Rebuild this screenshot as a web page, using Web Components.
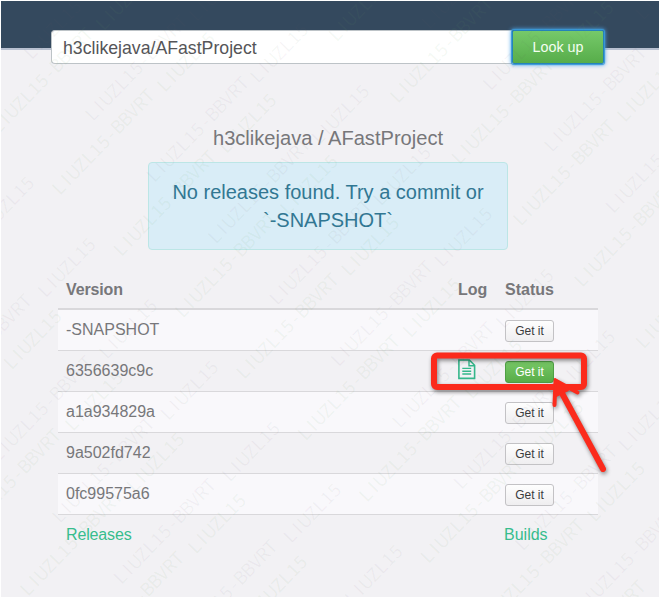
<!DOCTYPE html>
<html lang="en"><head><meta charset="utf-8"><title>AFastProject releases</title>
<style>html,body{margin:0;width:659px;height:597px;overflow:hidden}body{font-family:"Liberation Sans",Arial,sans-serif}</style></head>
<body><release-page></release-page>
<script>
const define = (name, html, setup) => customElements.define(name, class extends HTMLElement {
  constructor() {
    super();
    this.attachShadow({mode: 'open'}).innerHTML = html;
  }
  connectedCallback() { if (setup) setup(this, this.shadowRoot); }
});

define('get-button', `<style>
:host{display:block;box-sizing:border-box;width:49px;height:22px;border:1px solid #c3c2c5;border-radius:3px;background:linear-gradient(#fefefe,#efeef0);color:#3b3b3d;font-size:12px;line-height:20px;text-align:center}
:host([ready]){background:linear-gradient(#76c765,#58ad49);border-color:#4f9f44;color:#fff}
</style><slot></slot>`);

define('log-icon', `<style>:host{display:block;width:18px;height:21px}svg{display:block}</style>
<svg width="18" height="21" viewBox="0 0 18 21" fill="none" stroke="#35b78b" stroke-width="1.6"><path d="M.9 1H11.3L16.6 6.3V19.4H.9Z"/><path d="M11 1V6.7H16.6M4.3 9.4H13.2M4.3 12.2H13.2M4.3 15H13.2" stroke-width="1.4"/></svg>`);

define('version-row', `<style>
:host{display:grid;grid-template-columns:392px 47px 1fr;box-sizing:border-box;height:41px;padding-left:8px;border-bottom:1px solid #d9d8db;align-items:center;color:#77777a;font-size:16px}
:host([striped]){background:#f9f8fb}
.v{line-height:20px;padding-bottom:1px}get-button{margin-top:1px}log-icon{visibility:hidden;margin-top:-4px}
:host([ready]) log-icon{visibility:visible}
</style><span class="v"><slot></slot></span><log-icon></log-icon><get-button>Get it</get-button>`,
(host, root) => { if (host.hasAttribute('ready')) root.querySelector('get-button').setAttribute('ready', ''); });

define('lookup-bar', `<style>
:host{display:flex;width:554px;height:34px}
.field{box-sizing:border-box;width:461px;border:1px solid #bdc3c7;border-right:0;border-radius:4px 0 0 4px;background:#fff;color:#555558;font-size:17.7px;line-height:35px;padding-left:11px;white-space:nowrap}
.go{box-sizing:border-box;flex:1;border:1px solid #2583b9;border-radius:2px;background:linear-gradient(#76c96a,#57ad4a);color:#f4fff1;text-align:center;font-size:14.3px;line-height:32px;box-shadow:0 0 1px 1px #3898d8,0 0 4px 1px #52a8ec;margin-right:1px}
</style><div class="field"><slot></slot></div><div class="go">Look up</div>`);

define('release-alert', `<style>
:host{display:block;box-sizing:border-box;width:360px;height:88px;padding:15px 20px;border:1px solid #bce6e6;border-radius:4px;background:#d9edf7;color:#317793;font-size:20px;line-height:28px;text-align:center}
</style><slot></slot>`);

define('version-table', `<style>
:host{display:block;width:540px;color:#77777a;font-size:16px}
.head,.foot{display:grid;grid-template-columns:392px 47px 1fr;padding-left:8px}
.head{height:40px;box-sizing:border-box;border-bottom:2px solid #d9d8db;font-weight:bold;line-height:40px}
.head span:first-child{letter-spacing:-.15px}
.foot{line-height:40px;color:#37bd8d}.foot span:first-child{letter-spacing:-.15px}.foot span:last-child{grid-column:3;margin-left:-1px}
</style><div class="head"><span>Version</span><span>Log</span><span>Status</span></div><slot></slot><div class="foot"><span>Releases</span><span>Builds</span></div>`);

define('water-mark', `<style>:host{position:absolute;inset:-1px 0 0 -1px;pointer-events:none}svg{display:block}text{font:400 18px "Noto Sans CJK SC","Liberation Sans",sans-serif;text-anchor:middle}</style><svg width="659" height="597"></svg>`,
(host, root) => {
  // Diagonal chains: offset (x - y), one start x, long label, tint.
  const chains = [[620,638,0,0],[500,620,0,1],[397,547,1,0],[292,393,1,1],[172,253,0,0],[70,160,0,1],[-31,88,1,0],[-138,55,1,1],[-255,102,0,0],[-361,68,0,1],[-466,55,1,0],[-571,23,1,1]];
  let out = '';
  for (const [v, x0, long, green] of chains) {
    const label = long ? 'LIUZL15-BBVRT' : 'LIUZL15';
    const xs = [...label].map((_, i) => (5 + i * 10.65).toFixed(1)).join(' ');
    for (let k = -14; k < 14; k++) {
      const x = x0 + k * 61.4 + 5, y = x - v - 2;
      if (x < -90 || x > 655 || y < 4 || y > 690) continue;
      out += `<text x="${xs}" y="0" transform="translate(${x.toFixed(1)} ${y.toFixed(1)}) rotate(-46)" fill="${green ? '#65a060' : '#666066'}" fill-opacity="${green ? .075 : .06}">${label}</text>`;
    }
  }
  root.querySelector('svg').innerHTML = out;
});

define('callout-arrow', `<style>:host{position:absolute;left:418px;top:338px;pointer-events:none}svg{display:block;filter:drop-shadow(1px 2px 2px #0007)}</style>
<svg width="200" height="145" fill="none" stroke="#fb2b1c" stroke-linecap="round" stroke-linejoin="round"><rect x="15" y="16.5" width="150" height="31.5" rx="3" stroke-width="6"/><path d="M138 45L184 130" stroke-width="6"/><path d="M135.5 66L136.5 41.5L158.5 53.5" stroke-width="4"/><path d="M136 40L137 57L149 51Z" fill="#fb2b1c" stroke-width="2"/></svg>`);

define('release-page', `<style>
:host{display:block;position:relative;width:659px;height:597px;overflow:hidden;box-sizing:border-box;background:#f2f1f4;border:solid #fff;border-width:1px 0 0 1px}
header{height:49px;box-sizing:border-box;background:#34495e;border-bottom:2px solid #b8c0d0;padding:29px 0 0 50px}
main{display:flex;flex-direction:column;align-items:center;width:654px;padding-top:76px}
h1{margin:0;font-weight:normal;font-size:20.1px;line-height:24px;height:36px;color:#77777a}
version-table{margin-top:20px}
</style><header><lookup-bar>h3clikejava/AFastProject</lookup-bar></header>
<main><h1>h3clikejava / AFastProject</h1>
<release-alert>No releases found. Try a commit or<br>\`-SNAPSHOT\`</release-alert>
<version-table><version-row striped>-SNAPSHOT</version-row><version-row ready>6356639c9c</version-row><version-row striped>a1a934829a</version-row><version-row>9a502fd742</version-row><version-row striped>0fc99575a6</version-row></version-table></main>
<water-mark></water-mark><callout-arrow></callout-arrow>`);
</script></body></html>
